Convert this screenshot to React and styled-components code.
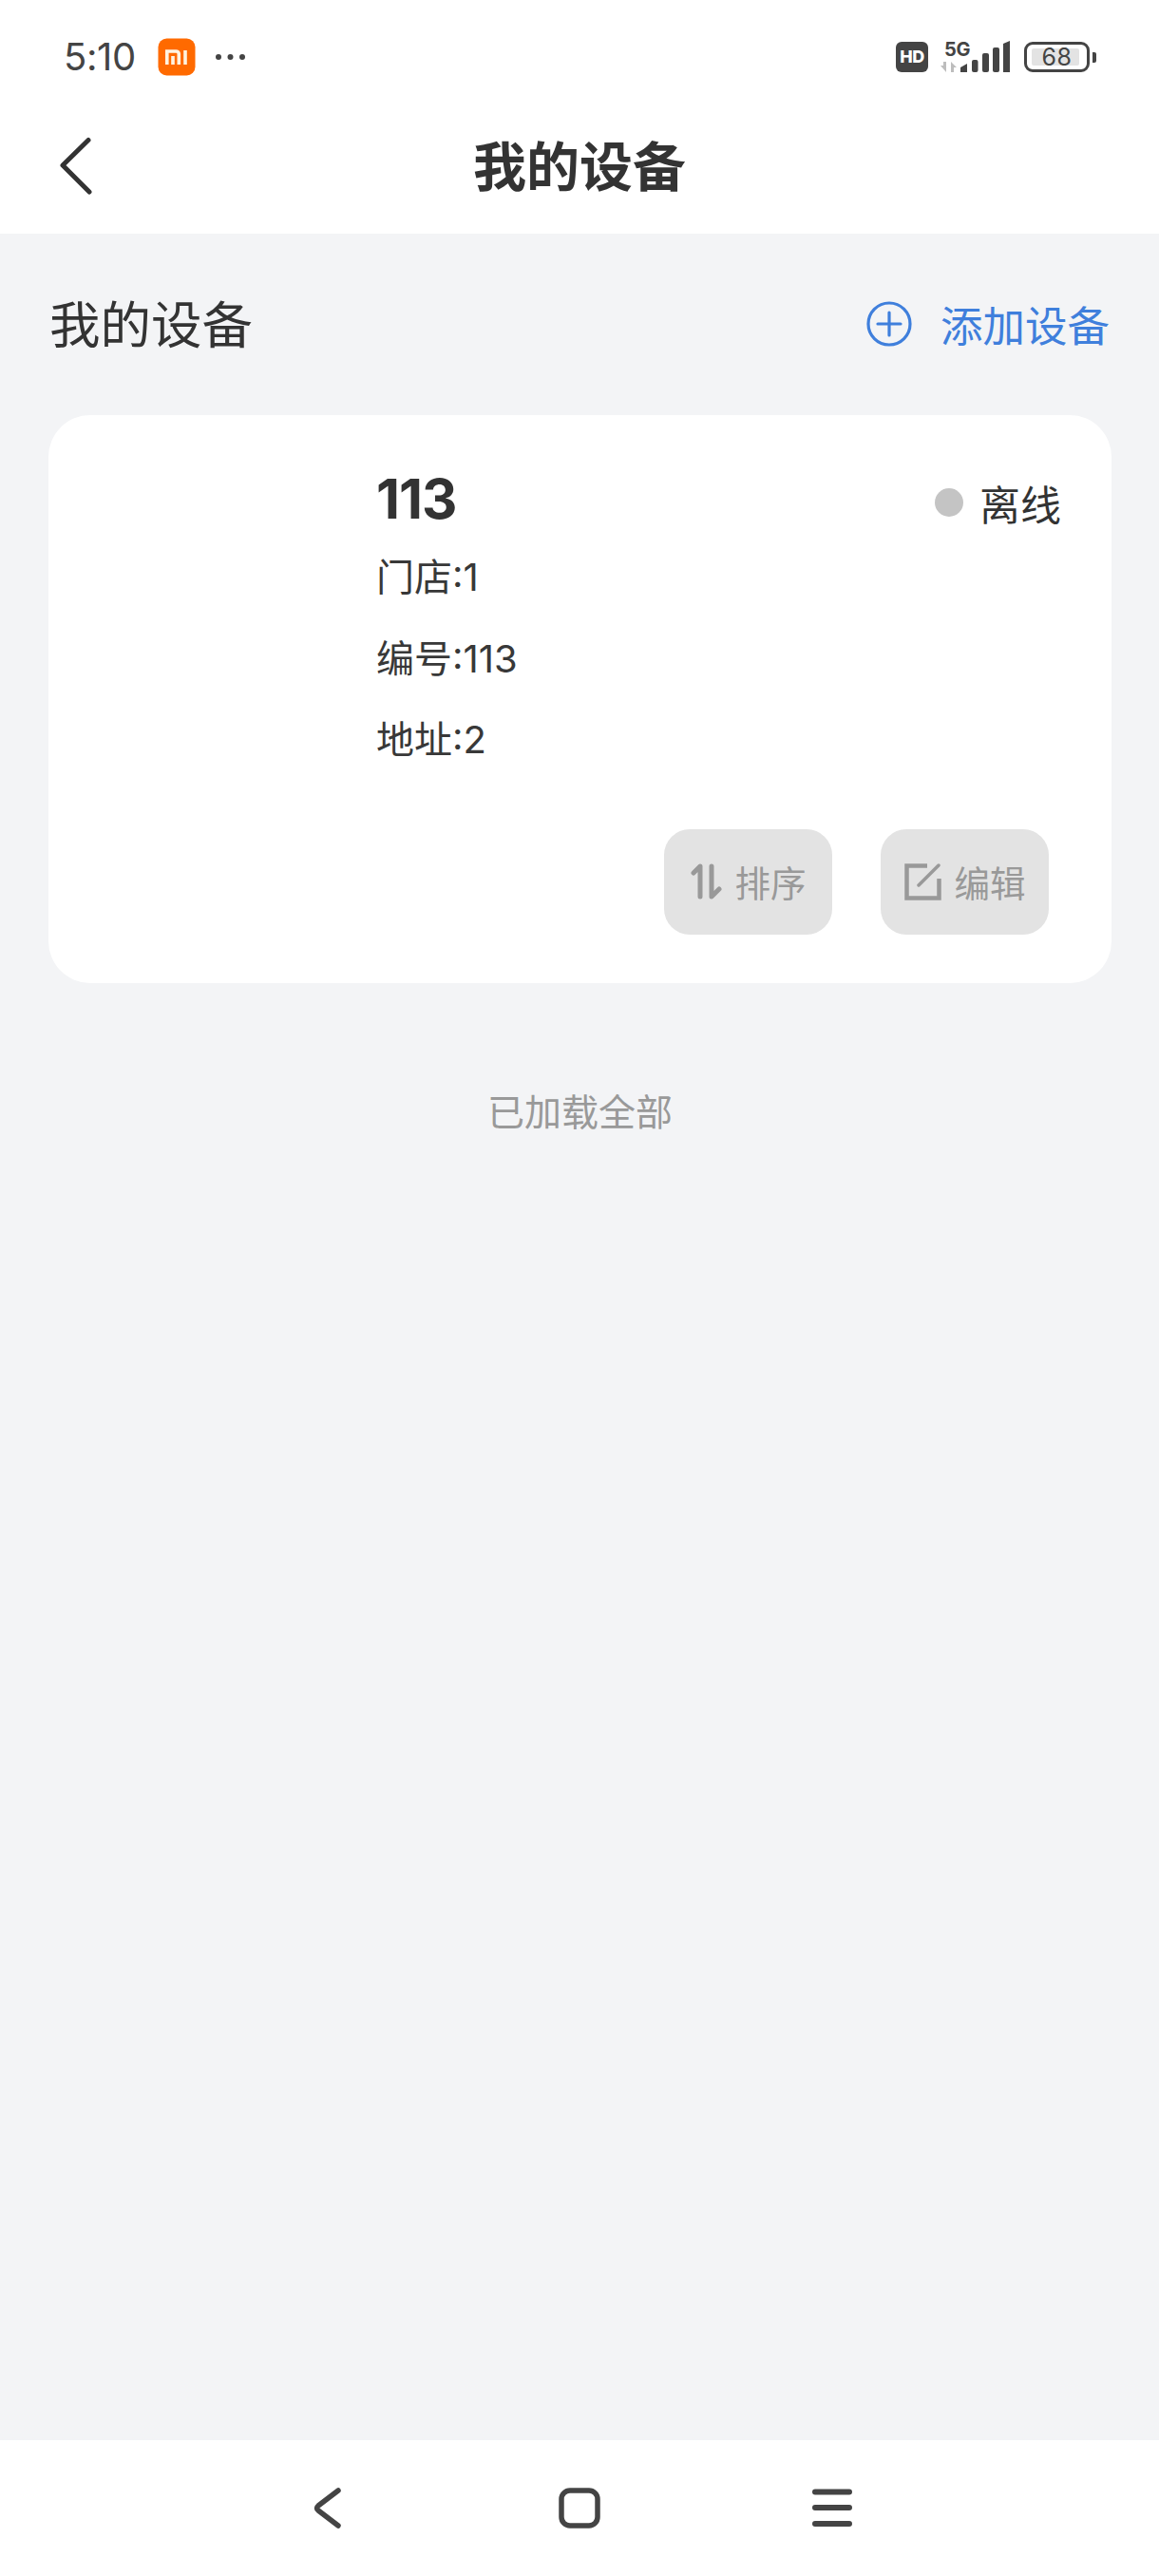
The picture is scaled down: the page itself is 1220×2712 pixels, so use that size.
import React from "react";
import styled, { createGlobalStyle } from "styled-components";

const Global = createGlobalStyle`
  html, body { margin: 0; padding: 0; background: #f3f4f6; }
  * { box-sizing: border-box; }
`;
const FONT = `"Noto Sans CJK SC", "Noto Sans", sans-serif`;
const Page = styled.div`
  width: 1220px; height: 2712px; display: flex; flex-direction: column;
  background: #f3f4f6; font-family: ${FONT}; color: #333; overflow: hidden;
`;
const Header = styled.header`
  height: 246px; background: #fff; display: flex; flex-direction: column; flex: none;
`;
const StatusBar = styled.div`
  height: 120px; display: flex; align-items: center; padding: 0 66px 0 67px; flex: none;
`;
const Time = styled.span`
  font-family: Inter, sans-serif; font-size: 40px; line-height: 1; color: #444; width: 99px; letter-spacing: -0.4px;
`;
const Dots = styled.svg` margin-left: 20px; `;
const Spacer = styled.div` flex: 1; `;
const HdBadge = styled.span`
  width: 34px; height: 32px; border-radius: 6px; background: #444; color: #fff;
  font: 800 18px/32px Inter, sans-serif; text-align: center; letter-spacing: -0.5px;
`;
const Signal = styled.div`
  width: 73px; height: 36px; margin-left: 13px; position: relative; flex: none;
`;
const FiveG = styled.span`
  position: absolute; left: 4px; top: 0; font: 700 20px/20px Inter, sans-serif; color: #444; letter-spacing: -0.3px;
`;
const SignalBars = styled.svg` position: absolute; left: 0; top: 0; `;
const Battery = styled.div`
  width: 69px; height: 32px; margin-left: 15px; border: 3px solid #444; border-radius: 9px;
  position: relative; display: flex; align-items: center; justify-content: center; flex: none;
`;
const BatteryFill = styled.div`
  position: absolute; left: 5px; top: 4px; bottom: 4px; width: 50px; background: #e3e3e3; border-radius: 2px;
`;
const BatteryText = styled.span`
  position: relative; font: 400 25px/1 Inter, sans-serif; color: #444; letter-spacing: 0.5px;
`;
const BatteryNub = styled.div`
  width: 4px; height: 11px; border-radius: 0 2px 2px 0; background: #444; margin-left: 3px; flex: none;
`;
const NavRow = styled.div`
  flex: 1; position: relative; display: flex; align-items: center; justify-content: center;
  padding-bottom: 22px;
`;
const BackButton = styled.svg` position: absolute; left: 62px; top: 24px; `;
const Title = styled.h1`
  margin: 0; font-size: 56px; line-height: 80px; font-weight: 700; color: #333;
`;
const Main = styled.main`
  flex: 1; padding: 0 50px 0 51px; display: flex; flex-direction: column;
`;
const SectionHead = styled.div`
  height: 191px; display: flex; align-items: center; justify-content: space-between; padding: 0 2px 2px 1px; flex: none;
`;
const SectionTitle = styled.h2`
  margin: 0 0 3px; font-size: 53.5px; line-height: 70px; font-weight: 400; color: #333;
`;
const AddLink = styled.div`
  display: flex; align-items: center; gap: 30px; color: #3f7fdc; font-size: 44.5px; line-height: 60px;
`;
const Card = styled.section`
  background: #fff; border-radius: 44px; height: 598px; padding: 53px 53px 51px 345px;
  display: flex; flex-direction: column; flex: none;
`;
const CardTop = styled.div` display: flex; justify-content: space-between; align-items: flex-start; `;
const Name = styled.div`
  font-family: Inter, ${FONT}; font-size: 58px; line-height: 70px; font-weight: 700; color: #333; letter-spacing: -1px;
`;
const Line = styled.div`
  font-size: 40px; line-height: 86px; height: 85.5px; color: #383838;
  font-family: Inter, ${FONT};
  font-weight: 400;
`;
const Info = styled.div` display: flex; flex-direction: column; `;
const NameGap = styled.div` height: 5px; `;
const Status = styled.div`
  display: flex; align-items: center; gap: 17px; font-size: 43px; line-height: 60px; color: #333; margin-top: 9px;
`;
const Dot = styled.span` width: 30px; height: 30px; border-radius: 50%; background: #c4c4c4; `;
const Actions = styled.div` display: flex; justify-content: flex-end; gap: 51px; margin-top: 51px; margin-right: 13px; `;
const ActionButton = styled.div`
  width: 177px; height: 111px; border-radius: 27px; background: #e3e3e3; color: #999;
  display: flex; align-items: center; justify-content: center; gap: 14px; font-size: 37.5px; line-height: 50px;
`;
const LoadedAll = styled.div`
  margin-top: 97px; text-align: center; font-size: 39px; line-height: 72px; color: #999;
`;
const BottomNav = styled.nav`
  height: 143px; background: #fff; flex: none;
  display: grid; grid-template-columns: 258px 267px 42px; align-items: start; padding-left: 330px; padding-top: 50px;
`;

const MiLogo = () => (
  <svg width="40" height="40" viewBox="0 0 40 40">
    <rect x="0.5" y="0.5" width="39" height="39" rx="9" fill="#ff6a00" />
    <path d="M9.8 28V14h9.5a3 3 0 0 1 3 3V28M16 19v9" fill="none" stroke="#fff3e0" strokeWidth="3.6" />
    <path d="M29 13v15" stroke="#fff3e0" strokeWidth="3.6" />
  </svg>
);
const SortIcon = () => (
  <svg width="33" height="38" viewBox="0 0 33 38" fill="none" stroke="#999" strokeWidth="5" strokeLinecap="round" strokeLinejoin="round">
    <path d="M10 35V3L3 10" />
    <path d="M22 3v32l8-8" />
  </svg>
);
const EditIcon = () => (
  <svg width="39" height="39" viewBox="0 0 39 39" fill="none" stroke="#999" strokeWidth="4.5">
    <path d="M24 2.5H2.5v34h34V16" />
    <path d="M15 23 36 2" strokeLinecap="round" strokeWidth="3.5" />
  </svg>
);

export default function App() {
  return (
    <Page>
      <Global />
      <Header>
        <StatusBar>
          <Time>5:10</Time>
          <MiLogo />
          <Dots width="33" height="8" viewBox="0 0 33 8">
            <circle cx="4" cy="4" r="3" fill="#444" />
            <circle cx="16.5" cy="4" r="3" fill="#444" />
            <circle cx="29" cy="4" r="3" fill="#444" />
          </Dots>
          <Spacer />
          <HdBadge>HD</HdBadge>
          <Signal>
            <SignalBars width="73" height="36" viewBox="0 0 73 36">
              <path d="M3 23h3v11L0 27h3z" fill="#bdbdbd" />
              <path d="M11 23l6 6h-3v5h-3z" fill="#bdbdbd" />
              <path d="M21 34v-5l7-4v9z" fill="#444" />
              <rect x="33" y="21" width="6.5" height="13" rx="2" fill="#444" />
              <rect x="44" y="14" width="7" height="20" rx="2" fill="#444" />
              <rect x="55" y="8" width="7" height="26" rx="2" fill="#444" />
              <path d="M66 4l7-3v33h-7z" fill="#444" />
            </SignalBars>
            <FiveG>5G</FiveG>
          </Signal>
          <Battery>
            <BatteryFill />
            <BatteryText>68</BatteryText>
          </Battery>
          <BatteryNub />
        </StatusBar>
        <NavRow>
          <BackButton width="40" height="62" viewBox="0 0 40 62" fill="none" stroke="#333" strokeWidth="5" strokeLinecap="round" strokeLinejoin="round">
            <path d="M31 3.5 4 30l28 28" />
          </BackButton>
          <Title>我的设备</Title>
        </NavRow>
      </Header>
      <Main>
        <SectionHead>
          <SectionTitle>我的设备</SectionTitle>
          <AddLink>
            <svg width="48" height="48" viewBox="0 0 48 48" fill="none" stroke="#3f7fdc" strokeWidth="3.2">
              <circle cx="24" cy="24" r="22" />
              <path d="M12 24h24M24 12v24" strokeLinecap="round" />
            </svg>
            <span>添加设备</span>
          </AddLink>
        </SectionHead>
        <Card>
          <CardTop>
            <Info>
              <Name>113</Name>
              <NameGap />
              <Line>门店:1</Line>
              <Line>编号:113</Line>
              <Line>地址:2</Line>
            </Info>
            <Status>
              <Dot />
              <span>离线</span>
            </Status>
          </CardTop>
          <Actions>
            <ActionButton><SortIcon />排序</ActionButton>
            <ActionButton><EditIcon />编辑</ActionButton>
          </Actions>
        </Card>
        <LoadedAll>已加载全部</LoadedAll>
      </Main>
      <BottomNav>
        <svg width="30" height="43" viewBox="0 0 30 43" fill="none" stroke="#444" strokeWidth="5.5" strokeLinecap="round" strokeLinejoin="round">
          <path d="M26 3 5 19q-3 2.5 0 5l21 16" />
        </svg>
        <svg width="44" height="43" viewBox="0 0 44 43" fill="none" stroke="#444" strokeWidth="5.5">
          <rect x="3" y="3" width="38" height="37" rx="9" />
        </svg>
        <svg width="42" height="43" viewBox="0 0 42 43" fill="none" stroke="#444" strokeWidth="6" strokeLinecap="round">
          <path d="M3 4.5h36M3 21h36M3 38h36" />
        </svg>
      </BottomNav>
    </Page>
  );
}
